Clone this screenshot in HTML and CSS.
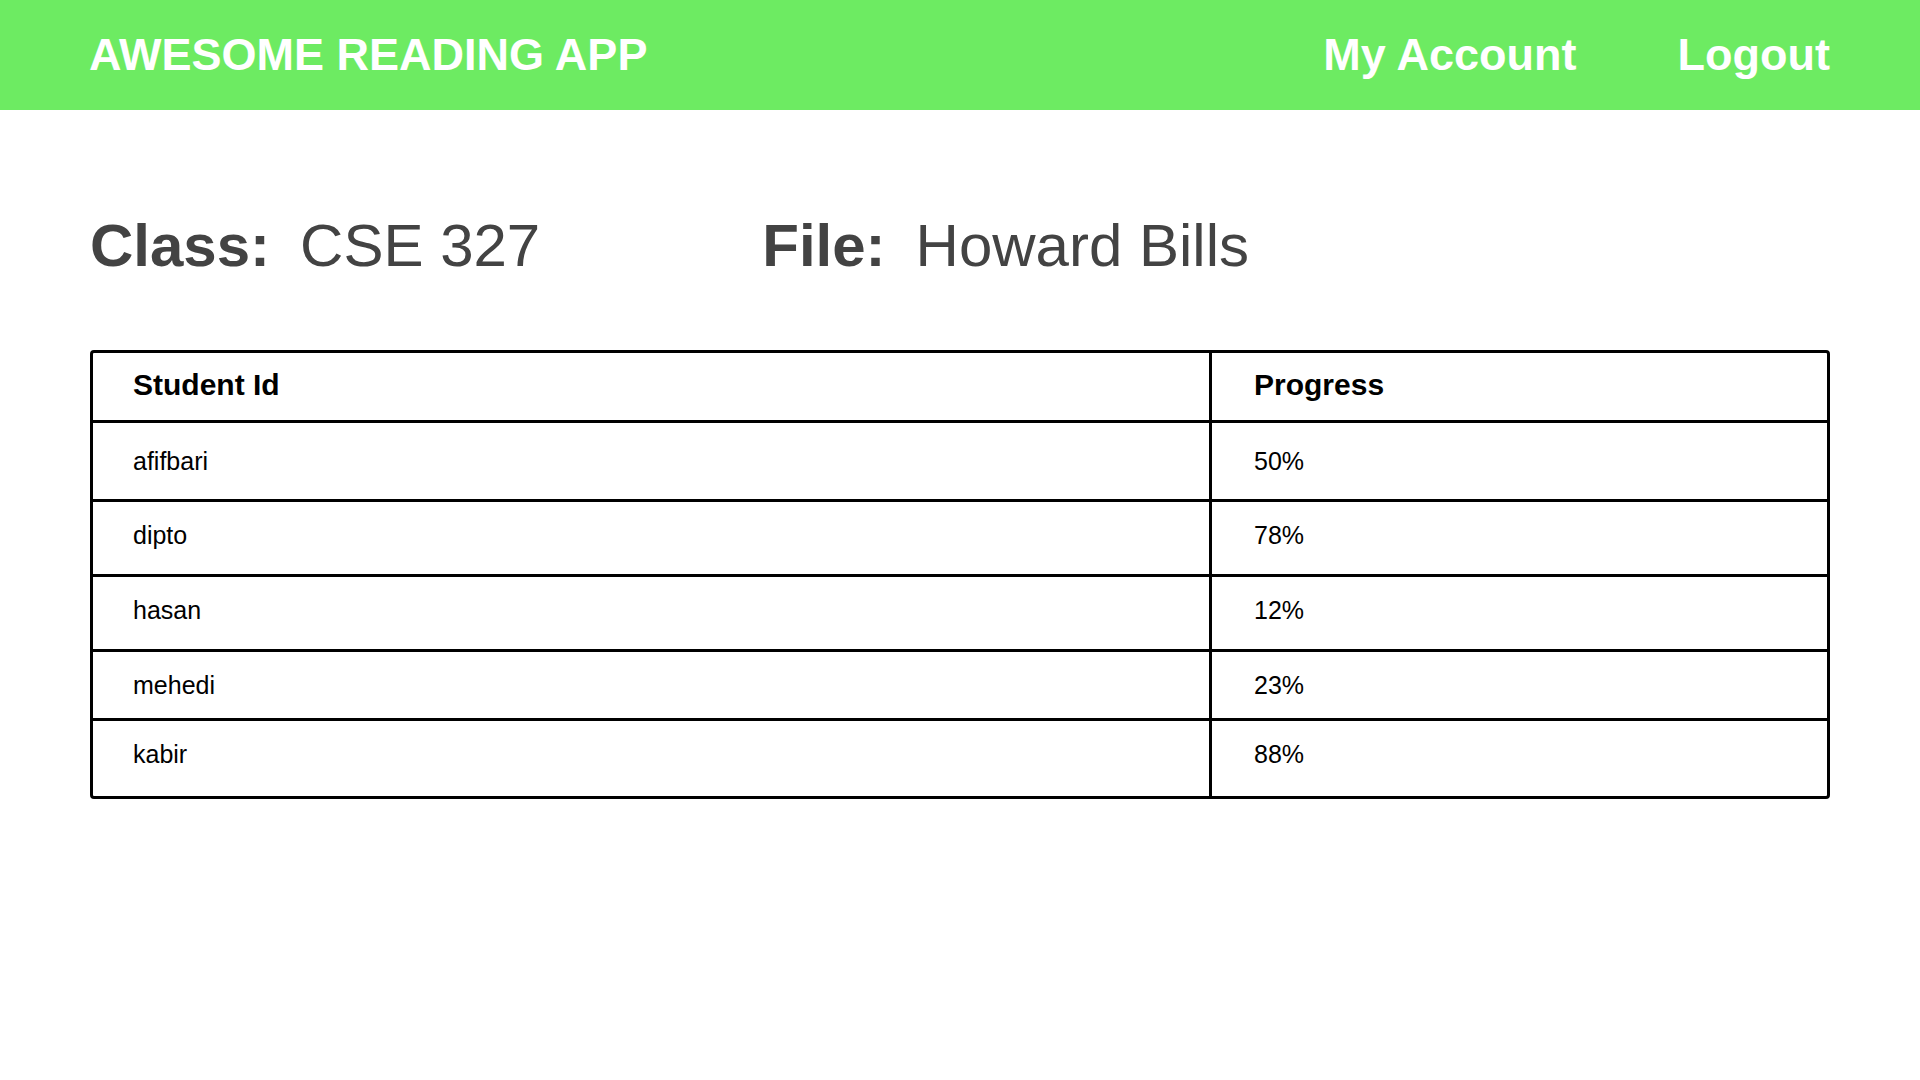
FILE: index.html
```html
<!DOCTYPE html>
<html lang="en">
<head>
<meta charset="utf-8">
<title>Awesome Reading App</title>
<link rel="stylesheet" href="styles.css">
</head>
<body>
<header class="topbar">
  <div class="brand">AWESOME READING APP</div>
  <nav class="nav">
    <a class="nav-link" href="#">My Account</a>
    <a class="nav-link" href="#">Logout</a>
  </nav>
</header>
<main class="content">
  <div class="info">
    <div class="info-item"><span class="label">Class:</span><span class="value">CSE 327</span></div>
    <div class="info-item"><span class="label">File:</span><span class="value">Howard Bills</span></div>
  </div>
  <div class="grid-table" role="table">
    <div class="cell head" role="columnheader">Student Id</div>
    <div class="cell head last-col" role="columnheader">Progress</div>
    <div class="cell" role="cell">afifbari</div>
    <div class="cell last-col" role="cell">50%</div>
    <div class="cell raise" role="cell">dipto</div>
    <div class="cell last-col raise" role="cell">78%</div>
    <div class="cell raise" role="cell">hasan</div>
    <div class="cell last-col raise" role="cell">12%</div>
    <div class="cell" role="cell">mehedi</div>
    <div class="cell last-col" role="cell">23%</div>
    <div class="cell last-row" role="cell">kabir</div>
    <div class="cell last-col last-row" role="cell">88%</div>
  </div>
</main>
</body>
</html>
```
FILE: styles.css
```css
* {
  box-sizing: border-box;
}

html, body {
  margin: 0;
  padding: 0;
  background: #ffffff;
}

body {
  font-family: "Liberation Sans", Arial, sans-serif;
  color: #000000;
}

.topbar {
  height: 110px;
  background: #6deb62;
  display: flex;
  align-items: center;
  justify-content: space-between;
  padding: 0 90px 0 89px;
}

.brand,
.nav-link {
  font-size: 45px;
  font-weight: 700;
  color: #ffffff;
  text-decoration: none;
  line-height: normal;
}

.nav {
  display: flex;
  gap: 101px;
}

.content {
  padding: 0 90px;
}

.info {
  margin-top: 102px;
  display: flex;
  gap: 222px;
  font-size: 60px;
  line-height: 68px;
  color: #434343;
}

.info-item {
  display: flex;
  gap: 30px;
}

.label {
  font-weight: 700;
}

.value {
  font-weight: 400;
}

.grid-table {
  margin-top: 70px;
  width: 1740px;
  border: 3px solid #000000;
  border-radius: 4px;
  display: grid;
  grid-template-columns: 1119px 1fr;
  grid-template-rows: 70px 79px 75px 75px 69px 75px;
}

.cell {
  display: flex;
  align-items: center;
  padding-left: 40px;
  border-bottom: 3px solid #000000;
  border-right: 3px solid #000000;
  font-size: 25px;
  color: #000000;
}

.cell.head {
  font-size: 30px;
  font-weight: 700;
  padding-bottom: 4px;
}

.cell.raise {
  padding-bottom: 5px;
}

.cell.last-col {
  border-right: none;
  padding-left: 42px;
}

.cell.last-row {
  border-bottom: none;
  padding-bottom: 8px;
}
```
